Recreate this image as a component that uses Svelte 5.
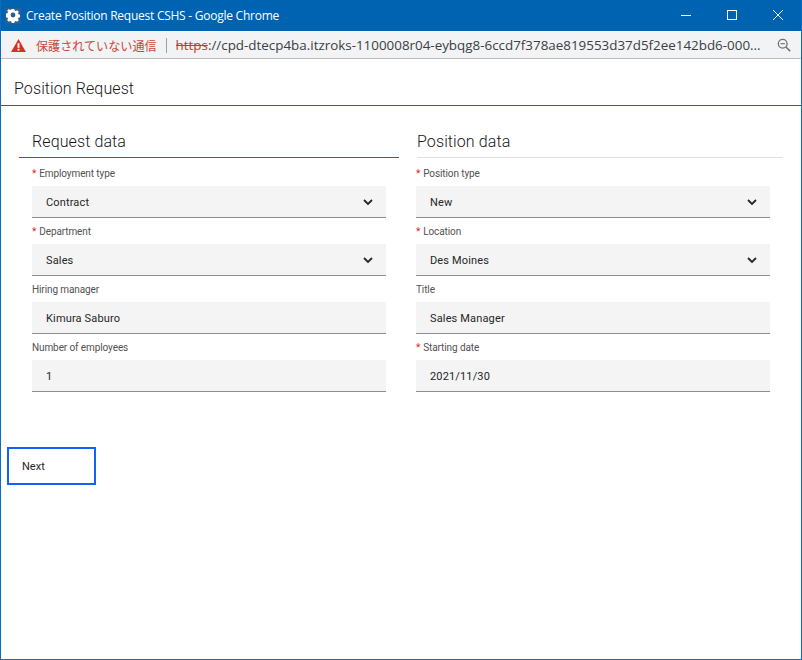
<script>
  const left = [
    { label: 'Employment type', value: 'Contract', required: true, select: true },
    { label: 'Department', value: 'Sales', required: true, select: true },
    { label: 'Hiring manager', value: 'Kimura Saburo' },
    { label: 'Number of employees', value: '1' }
  ];
  const right = [
    { label: 'Position type', value: 'New', required: true, select: true },
    { label: 'Location', value: 'Des Moines', required: true, select: true },
    { label: 'Title', value: 'Sales Manager' },
    { label: 'Starting date', value: '2021/11/30', required: true }
  ];
  const columns = [
    { title: 'Request data', fields: left, active: true },
    { title: 'Position data', fields: right, active: false }
  ];
</script>

<div class="window">
  <header class="titlebar">
    <span class="appicon">
      <svg width="16" height="16" viewBox="0 0 16 16">
        <path fill="#fff" fill-rule="evenodd" d="M6.7 2h2.600l.4 1.500 1.100.5 1.400-.8 1.600 1.600-.8 1.400.5 1.100 1.500.4v2.600l-1.500.4-.5 1.100.8 1.400-1.600 1.600-1.400-.8-1.100.5-.4 1.500H6.700l-.4-1.500-1.100-.5-1.400.8-1.600-1.600.8-1.400-.5-1.100-1.500-.4V6.600l1.500-.4.500-1.100-.8-1.400 1.600-1.600 1.400.8 1.100-.5zM8 5.600a2.400 2.400 0 1 0 0 4.800 2.400 2.400 0 0 0 0-4.800z" transform="translate(0 -1)"/>
      </svg>
    </span>
    <span class="wintitle">Create Position Request CSHS - Google Chrome</span>
    <div class="controls">
      <svg class="ctl" width="46" height="32" viewBox="0 0 46 32"><path d="M18 15.500h10" stroke="#fff" fill="none"/></svg>
      <svg class="ctl" width="46" height="32" viewBox="0 0 46 32"><rect x="18.500" y="10.500" width="9" height="9" stroke="#fff" fill="none"/></svg>
      <svg class="ctl" width="46" height="32" viewBox="0 0 46 32"><path d="M18 10l10 10M28 10l-10 10" stroke="#fff" fill="none"/></svg>
    </div>
  </header>

  <div class="addressbar">
    <svg class="warn" width="15" height="13" viewBox="0 0 16 14">
      <path fill="#d93025" d="M8 0l8 14H0z"/>
      <rect x="7" y="4.500" width="2" height="5" fill="#fff"/>
      <rect x="7" y="10.500" width="2" height="2" fill="#fff"/>
    </svg>
    <span class="insecure">保護されていない通信</span>
    <span class="sep"></span>
    <span class="url"><s>https</s>://cpd-dtecp4ba.itzroks-1100008r04-eybqg8-6ccd7f378ae819553d37d5f2ee142bd6-000...</span>
    <svg class="zoomicon" width="14" height="14" viewBox="0 0 16 16">
      <circle cx="6.500" cy="6.500" r="5" fill="none" stroke="#6d7074" stroke-width="1.500"/>
      <path d="M10.200 10.200L15 15" stroke="#6d7074" stroke-width="1.700"/>
      <path d="M4 6.500h5" stroke="#6d7074" stroke-width="1.300"/>
    </svg>
  </div>

  <main class="page">
    <h1 class="pagetitle">Position Request</h1>
    <div class="columns">
      {#each columns as col}
        <section class="column" class:active={col.active}>
          <h2 class="tab">{col.title}</h2>
          <div class="fields">
            {#each col.fields as f}
              <div class="field">
                <div class="label">{#if f.required}<span class="req">*</span>{/if}{f.label}</div>
                <div class="control">
                  <span>{f.value}</span>
                  {#if f.select}
                    <svg width="10" height="7" viewBox="0 0 10 7"><path d="M1 1l4 4 4-4" fill="none" stroke="#262626" stroke-width="1.800"/></svg>
                  {/if}
                </div>
              </div>
            {/each}
          </div>
        </section>
      {/each}
    </div>
    <button class="next">Next</button>
  </main>
</div>

<style>
  :global(body) { margin: 0; background: #fff; }
  .window {
    box-sizing: border-box;
    width: 802px;
    height: 660px;
    border: 1px solid #0b6cc4;
    border-top: 0;
    display: flex;
    flex-direction: column;
    overflow: hidden;
  }
  .titlebar {
    height: 31px;
    flex: none;
    background: #0063b1;
    display: flex;
    align-items: center;
    color: #fff;
    margin: 0 -1px;
  }
  .appicon {
    width: 16px;
    height: 16px;
    margin-left: 5px;
    display: flex;
    background: #2b5f8e;
  }
  .wintitle {
    margin-left: 5px;
    font: 12px "Open Sans", "Noto Sans", sans-serif;
    letter-spacing: -0.25px;
  }
  .controls { margin-left: auto; display: flex; margin-right: 1px; }
  .addressbar {
    height: 27px;
    flex: none;
    box-sizing: border-box;
    background: #f1f3f4;
    border-bottom: 1px solid #b9bbbd;
    display: flex;
    align-items: center;
    padding-left: 10px;
    margin-top: 1px;
  }
  .warn { flex: none; }
  .insecure {
    margin-left: 10px;
    font: 12.100px "Noto Sans CJK JP", sans-serif;
    color: #c9483d;
    white-space: nowrap;
  }
  .sep { width: 1px; height: 15px; background: #9aa0a6; margin: 0 9px 0 9px; flex: none; }
  .url {
    font: 13.400px "Open Sans", "Noto Sans", sans-serif;
    color: #3c4043;
    white-space: nowrap;
    width: 592px;
    overflow: hidden;
    flex: none;
  }
  .url s { color: #c5392e; }
  .zoomicon { margin-left: auto; margin-right: 10px; flex: none; }
  .page { flex: 1; font-family: Roboto, "Noto Sans", sans-serif; color: #161616; }
  .pagetitle {
    margin: 0;
    font-weight: 300;
    font-size: 16px;
    line-height: 20px;
    height: 47px;
    box-sizing: border-box;
    padding: 20px 0 0 13px;
    border-bottom: 1px solid #0f62fe;
    letter-spacing: 0.1px;
  }
  .columns { display: flex; padding-left: 18px; gap: 18px; margin-top: 16px; }
  .column { width: 380px; }
  .column + .column { width: 366px; }
  .tab {
    margin: 0;
    font-weight: 300;
    font-size: 16px;
    line-height: 20px;
    letter-spacing: 0.1px;
    padding: 10px 13px 5px;
    height: 36px;
    box-sizing: border-box;
    border-bottom: 1px solid #e0e0e0;
  }
  .column + .column .tab { padding-left: 0; }
  .column.active .tab { border-bottom-color: #0f62fe; }
  .fields { padding: 2px 13px 0; }
  .column + .column .fields { padding-left: 0; margin-left: -1px; }
  .field { height: 58px; display: flex; flex-direction: column; justify-content: flex-end; width: 354px; }
  .label { font-size: 10px; line-height: 14px; color: #525252; margin-bottom: 5px; letter-spacing: -0.1px; }
  .req { color: #da1e28; margin-right: 3px; }
  .control {
    height: 32px;
    box-sizing: border-box;
    background: #f4f4f4;
    border-bottom: 1px solid #8d8d8d;
    display: flex;
    align-items: center;
    justify-content: space-between;
    padding: 1px 13px 0 14px;
    font-size: 11px;
    letter-spacing: 0.15px;
    color: #262626;
  }
  .next {
    display: block;
    margin: 55px 0 0 6px;
    width: 89px;
    height: 38px;
    box-sizing: border-box;
    border: 2px solid #0f62fe;
    background: #fff;
    text-align: left;
    padding: 0 0 0 13px;
    font: 11px Roboto, sans-serif;
    color: #262626;
  }
</style>
